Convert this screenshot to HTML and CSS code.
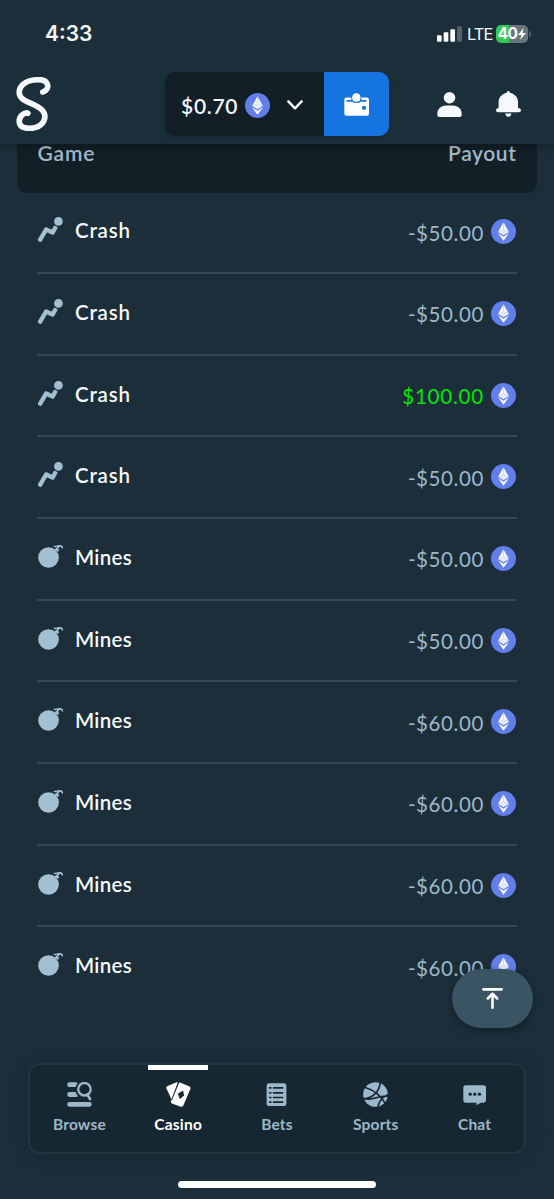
FILE: index.html
```html
<!DOCTYPE html>
<html lang="en">
<head>
<meta charset="utf-8">
<title>Bets</title>
<link rel="stylesheet" href="styles.css">
</head>
<body>
<svg class="defs" aria-hidden="true">
  <symbol id="eth" viewBox="0 0 75 75"><circle cx="37.500" cy="37.500" r="37.500" fill="#627eea"/><path d="M37.500 10v22L21 39z" fill="#fff"/><path d="M37.500 10v22L54 39z" fill="#f1f3ff"/><path d="M37.500 32 21 39l16.500 9.500L54 39z" fill="#e6eaff"/><path d="M21 43l16.500 10L54 43 37.500 65z" fill="#fff"/></symbol>
  <symbol id="crash" viewBox="0 0 74 74"><path d="M6.500 67 24 37l19 9 8-14" fill="none" stroke="currentColor" stroke-width="13" stroke-linecap="round" stroke-linejoin="round"/><circle cx="60.500" cy="13" r="16" fill="#1b2e39"/><circle cx="60.500" cy="13" r="12.800" fill="currentColor"/></symbol>
  <symbol id="mine" viewBox="0 0 76 70"><circle cx="32" cy="38" r="31.500" fill="currentColor"/><path d="M50 4c5 3 9-2 14-2 6 0 10 3 11 7M54 14l10-9" fill="none" stroke="currentColor" stroke-width="4.500" stroke-linecap="round"/><path d="m51 13 7-5 7 8-5 5z" fill="currentColor"/></symbol>
</svg>
<div class="screen">
  <div class="status">
    <span class="time">4:33</span>
    <div class="status-right">
      <svg class="signal" viewBox="0 0 75 47"><rect y="27" width="14" height="20" rx="3"/><rect x="20" y="18" width="14" height="29" rx="3"/><rect x="40" y="9" width="14" height="38" rx="3"/><rect x="60" width="15" height="47" rx="3" opacity=".25"/></svg>
      <span class="lte">LTE</span>
      <div class="battery"><span>40</span><svg viewBox="0 0 8 12"><path d="M5.500 0 0 7h3.500L2 12l6-7H4.500z" fill="#fff"/></svg></div>
      <i class="battery-tip"></i>
    </div>
  </div>
  <header class="topbar">
    <svg class="logo" viewBox="0 0 104 164"><path d="M80 45c12-3 17-14 14-23C89 8 72 6 53 9 25 13 9 28 9 46c0 23 26 28 49 40 27 13 34 30 24 48-9 17-34 24-56 19-22-5-20-28-8-39 6-5 13-7 17-5" fill="none" stroke="#f5f9ff" stroke-width="17" stroke-linecap="round" stroke-linejoin="round"/></svg>
    <div class="wallet">
      <div class="balance"><span>$0.70</span><svg class="coin"><use href="#eth"/></svg><svg class="chevron" viewBox="0 0 48 30"><path d="m4 4 20 21L44 4" fill="none" stroke="#fff" stroke-width="7" stroke-linecap="round" stroke-linejoin="round"/></svg></div>
      <div class="wallet-btn"><svg viewBox="0 0 76 70"><path d="M7 14h62c4 0 7 3 7 7v42q0 6-6 6H7q-6 0-6-6V21c0-4 2-7 6-7z" fill="#fff"/><path d="M8 24h18c3 3 7 4 12 4s9-1 12-4h18" fill="none" stroke="#1475e1" stroke-width="5"/><path d="M22 10h31v13q-15 8-31 0z" fill="#1475e1"/><circle cx="37.500" cy="13.500" r="13" fill="#fff"/><path d="M27 16h21v8H27z" fill="#fff"/><circle cx="61" cy="45" r="6.500" fill="#1475e1"/></svg></div>
    </div>
    <svg class="user" viewBox="0 0 74 76"><circle cx="37" cy="17.500" r="17.500"/><path d="M26 41h22c15 0 26 11 26 25v4q0 6-6 6H6q-6 0-6-6v-4C0 52 11 41 26 41z"/></svg>
    <svg class="bell" viewBox="0 0 76 78"><path d="M33 5c0-7 9-7 9 0 15 3 25 14 25 29v17c6 0 9 3 9 7s-3 6-7 6H7c-4 0-7-2-7-6s3-7 8-7V34C8 19 18 8 33 5zM28 68h19c-1 6-5 10-9.500 10S29 74 28 68z"/></svg>
  </header>
  <main class="bets">
    <div class="table-head"><span>Game</span><span class="payout">Payout</span></div>
    <div class="rows">
      <div class="row"><svg class="game crash"><use href="#crash"/></svg><span class="name">Crash</span><span class="amount">-$50.00</span><svg class="coin"><use href="#eth"/></svg></div>
      <div class="row"><svg class="game crash"><use href="#crash"/></svg><span class="name">Crash</span><span class="amount">-$50.00</span><svg class="coin"><use href="#eth"/></svg></div>
      <div class="row"><svg class="game crash"><use href="#crash"/></svg><span class="name">Crash</span><span class="amount win">$100.00</span><svg class="coin"><use href="#eth"/></svg></div>
      <div class="row"><svg class="game crash"><use href="#crash"/></svg><span class="name">Crash</span><span class="amount">-$50.00</span><svg class="coin"><use href="#eth"/></svg></div>
      <div class="row"><svg class="game mine"><use href="#mine"/></svg><span class="name mines">Mines</span><span class="amount">-$50.00</span><svg class="coin"><use href="#eth"/></svg></div>
      <div class="row"><svg class="game mine"><use href="#mine"/></svg><span class="name mines">Mines</span><span class="amount">-$50.00</span><svg class="coin"><use href="#eth"/></svg></div>
      <div class="row"><svg class="game mine"><use href="#mine"/></svg><span class="name mines">Mines</span><span class="amount">-$60.00</span><svg class="coin"><use href="#eth"/></svg></div>
      <div class="row"><svg class="game mine"><use href="#mine"/></svg><span class="name mines">Mines</span><span class="amount">-$60.00</span><svg class="coin"><use href="#eth"/></svg></div>
      <div class="row"><svg class="game mine"><use href="#mine"/></svg><span class="name mines">Mines</span><span class="amount">-$60.00</span><svg class="coin"><use href="#eth"/></svg></div>
      <div class="row"><svg class="game mine"><use href="#mine"/></svg><span class="name mines">Mines</span><span class="amount">-$60.00</span><svg class="coin"><use href="#eth"/></svg></div>
    </div>
  </main>
  <div class="to-top"><svg viewBox="0 0 62 62"><path d="M4 4h54M31 58V20M17 31l14-14 14 14" fill="none" stroke="#fff" stroke-width="7.500" stroke-linecap="round" stroke-linejoin="round"/></svg></div>
  <nav class="tabs">
    <div class="tab"><svg viewBox="0 0 76 76"><path d="M8 8h18M8 38h20M8 68h60" stroke="currentColor" stroke-width="15" stroke-linecap="round"/><circle cx="53" cy="23" r="28" fill="#172731"/><circle cx="53" cy="22" r="19" fill="none" stroke="currentColor" stroke-width="7"/><path d="m62 38 8 14" stroke="currentColor" stroke-width="8" stroke-linecap="round"/></svg><span>Browse</span></div>
    <div class="tab active"><svg viewBox="0 0 76 76"><path d="M5 12 32 1q4-1 3 3L17 53 1 19q-2-5 4-7zM44 2l26 11q6 2 4 8L53 71q-2 6-8 4L18 65q-4-2-3-7L38 4q2-4 6-2z" fill="currentColor"/><path d="M38 3 17 55" stroke="#172731" stroke-width="3"/><path d="m52 26 3 15-13 11-6-16z" fill="#172731"/></svg><span>Casino</span></div>
    <div class="tab"><svg viewBox="0 0 76 76"><rect x="8" y="4" width="60" height="69" rx="7" fill="currentColor"/><path d="M17 18h4m8 0h28M17 33h4m8 0h28M17 47h4m8 0h28M17 61h4m8 0h28" stroke="#172731" stroke-width="5" stroke-linecap="round"/></svg><span>Bets</span></div>
    <div class="tab"><svg viewBox="0 0 76 76"><circle cx="38" cy="38" r="37.500" fill="currentColor"/><path d="M3 15Q50 29 69 68M0 52C23 49 49 38 53-1M-2 48C24 62 46 38 76 43M45 77Q49 50 77 38" fill="none" stroke="#172731" stroke-width="5"/></svg><span>Sports</span></div>
    <div class="tab"><svg viewBox="0 0 76 76"><path d="M11 10h54q8 0 8 8v37q0 7-7 8h-9L44 71v-8H12q-8 0-8-8V18q0-8 7-8z" fill="currentColor"/><g fill="#172731"><circle cx="25" cy="37" r="5"/><circle cx="39" cy="37" r="5"/><circle cx="53" cy="37" r="5"/></g></svg><span>Chat</span></div>
  </nav>
  <div class="home-bar"></div>
</div>
</body>
</html>
```
FILE: styles.css
```css
* { box-sizing: border-box; }
body { margin: 0; background: #1b2e39; }
.defs { display: none; }
.screen { position: relative; width: 554px; height: 1199px; overflow: hidden; display: flex; flex-direction: column; background: #1b2e39; color: #f5f9ff; font-family: Lato, sans-serif; }
svg { display: block; flex: none; }
.status { height: 64px; flex: none; display: flex; justify-content: space-between; align-items: center; padding: 3px 23px 0 45px; font-family: Inter, sans-serif; }
.time { font-size: 21px; font-weight: 600; }
.status-right { display: flex; align-items: center; }
.signal { width: 25px; height: 16px; fill: #fff; }
.lte { margin-left: 5px; width: 24px; font-size: 16.500px; letter-spacing: -.9px; font-weight: 400; }
.battery { margin-left: 5px; width: 32px; height: 18px; border-radius: 5px; background: linear-gradient(90deg, #34c759 13px, #69757c 13px); display: flex; align-items: center; justify-content: center; gap: 1px; color: #fff; font-size: 15.500px; font-weight: 700; letter-spacing: -.5px; }
.battery svg { width: 8px; height: 12px; }
.battery-tip { width: 2px; height: 6px; margin-left: 1px; border-radius: 0 2px 2px 0; background: #52616b; }
.topbar { height: 80px; flex: none; display: flex; align-items: center; padding: 0 33px 0 16px; position: relative; z-index: 1; background: #1b2f3a; box-shadow: 0 3px 6px rgba(0,0,0,.22); }
.logo { width: 35px; height: 54.500px; }
.wallet { display: flex; width: 224px; height: 64px; margin-left: 114px; border-radius: 10px; overflow: hidden; box-shadow: 0 2px 5px rgba(0,0,0,.15); }
.balance { width: 159px; background: #121f27; display: flex; align-items: center; padding: 2px 0 0 16px; font-size: 21px; font-weight: 600; }
.balance span { width: 63.500px; letter-spacing: .7px; }
.coin { width: 25px; height: 25px; }
.chevron { width: 16px; height: 10px; margin-left: 17px; }
.wallet-btn { flex: 1; display: grid; place-items: center; background: #1475e1; }
.wallet-btn svg { width: 25px; height: 23px; }
.user { width: 25px; height: 25px; margin-left: 48px; fill: #f5f9ff; }
.bell { width: 25px; height: 26px; margin-left: 34px; fill: #f5f9ff; }
.bets { margin: 0 17px; flex: none; }
.table-head { height: 48.500px; display: flex; justify-content: space-between; padding: 0 20.500px; background: #121f27; border-radius: 0 0 10px 10px; color: #a2b8c9; font-size: 21px; font-weight: 600; line-height: 18px; letter-spacing: .8px; }
.payout { letter-spacing: .6px; }
.rows { padding: 0 20px; }
.row { height: 81.670px; display: flex; align-items: center; padding: 0 1.500px 1px 0; border-bottom: 2px solid #304857; }
.row:last-child { border-color: transparent; }
.game { color: #a3c0d3; margin: -4px 12px 0 1px; }
.crash { width: 25px; height: 25px; }
.mine { width: 25px; height: 23px; }
.name { flex: 1; font-size: 20.500px; font-weight: 600; letter-spacing: .8px; margin-top: -3px; }
.name.mines { letter-spacing: .3px; }
.amount { font-size: 20.500px; color: #9db8ca; margin-right: 6.500px; letter-spacing: .6px; margin-top: 2px; }
.win { color: #00e701; letter-spacing: .8px; }
.to-top { position: absolute; left: 452px; top: 969px; width: 81px; height: 59px; border-radius: 30px; display: grid; place-items: center; background: #3b5464; box-shadow: 0 3px 8px rgba(0,0,0,.3); }
.to-top svg { width: 21px; height: 21px; }
.tabs { flex: none; height: 91px; margin: 53.500px 28px 0; display: grid; grid-template-columns: repeat(5, 1fr); border: 2px solid #23353f; border-radius: 12px; background: #172731; box-shadow: 0 2px 22px rgba(0,0,0,.12); }
.tab { display: flex; flex-direction: column; align-items: center; padding-top: 17px; color: #9cb8ca; font-size: 15.500px; font-weight: 700; letter-spacing: .2px; }
.tab svg { width: 25px; height: 25px; margin-bottom: 8px; }
.active { color: #fff; background: linear-gradient(#fff, #fff) center top / 60px 5px no-repeat; }
.home-bar { width: 198px; height: 7px; margin: 27px auto 0; border-radius: 4px; background: #fff; }
```
